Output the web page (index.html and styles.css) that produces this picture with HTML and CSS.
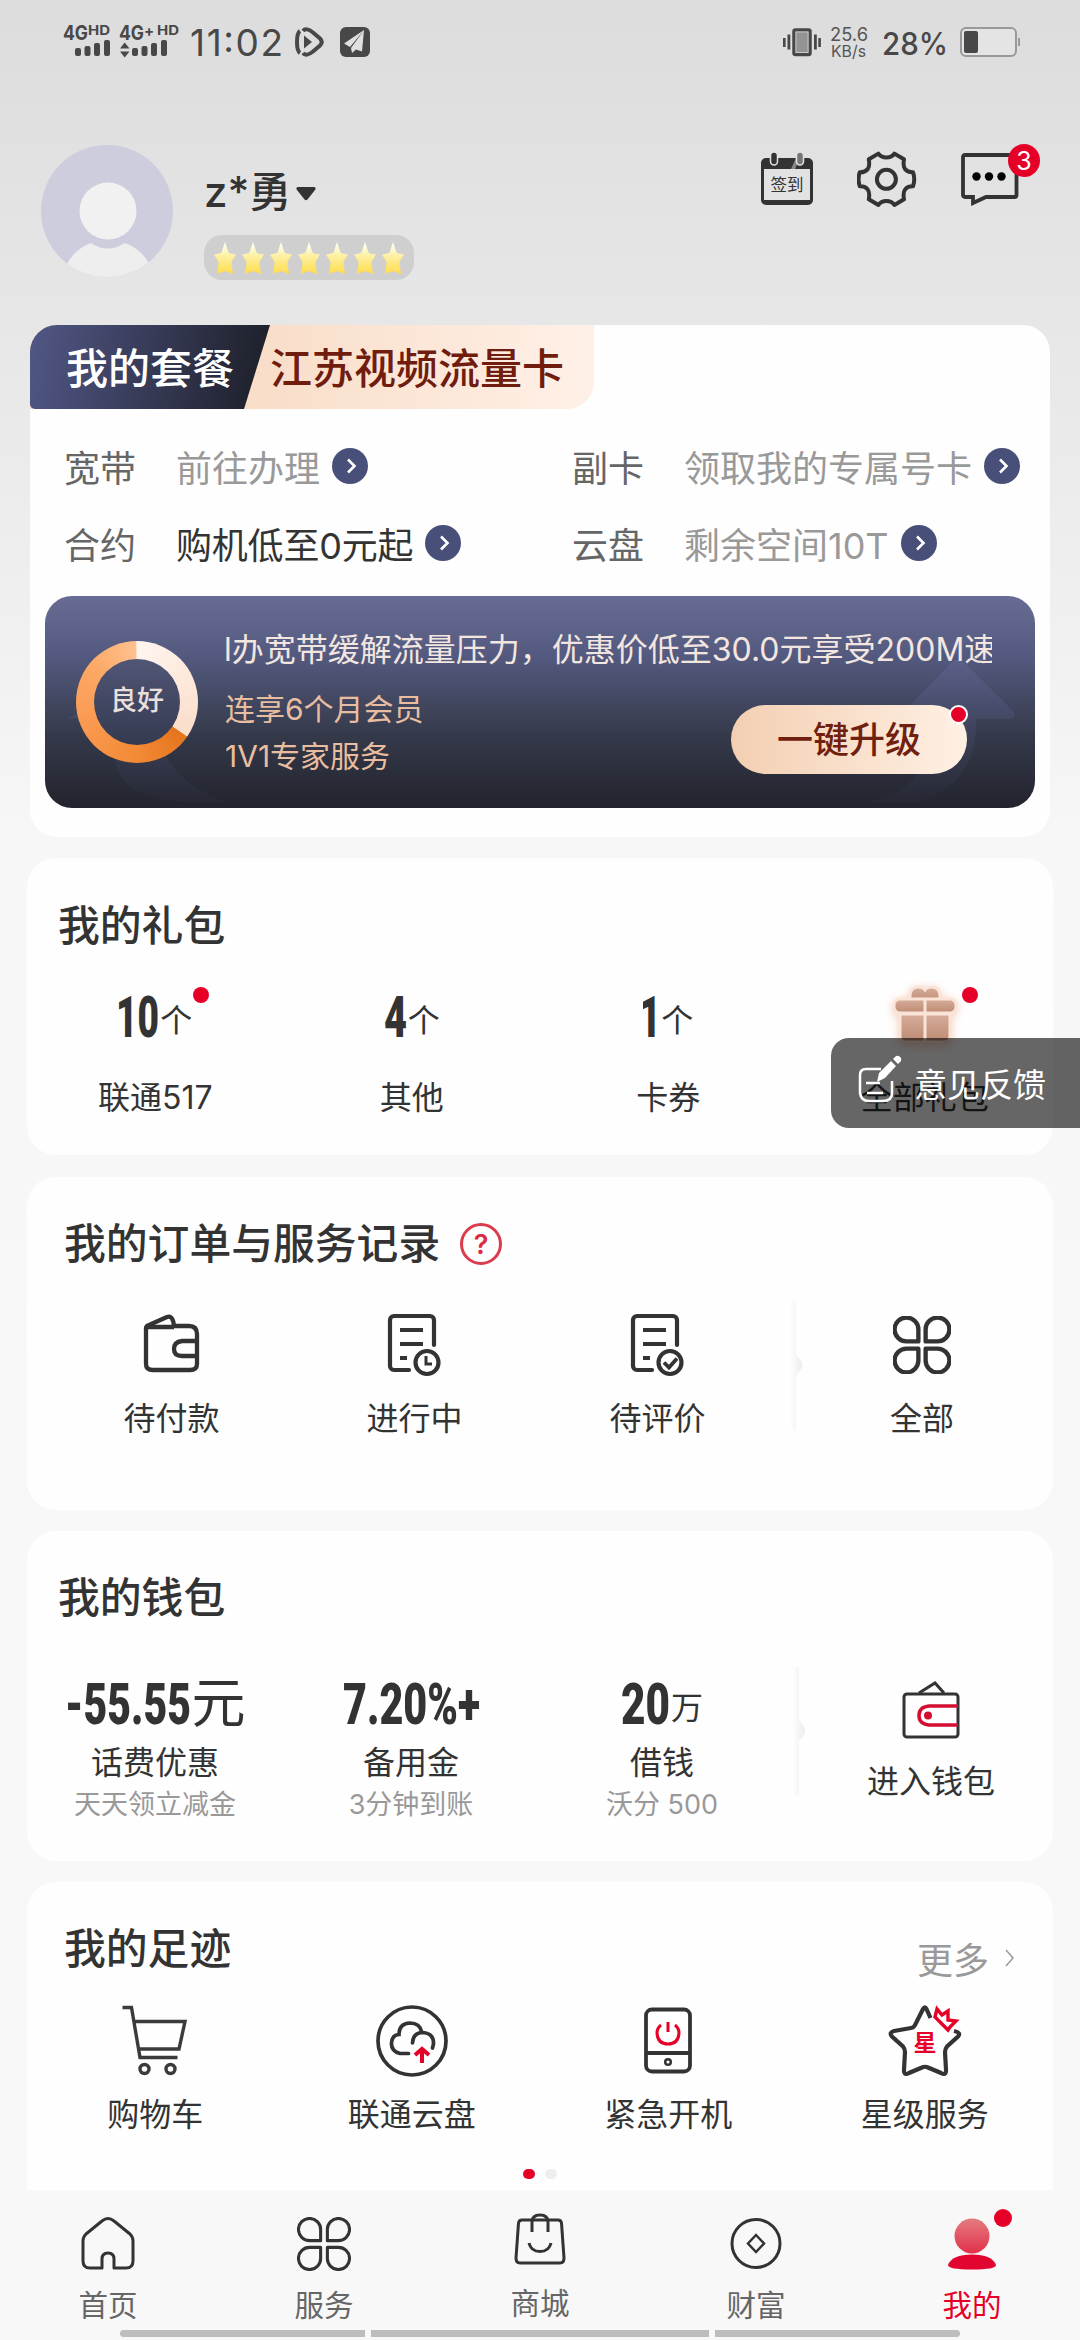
FILE: index.html
```html
<!DOCTYPE html>
<html lang="zh-CN">
<head>
<meta charset="utf-8">
<title>我的</title>
<link rel="stylesheet" href="styles.css">
</head>
<body>
<svg class="defs" width="0" height="0" aria-hidden="true">
  <defs>
    <linearGradient id="gold" x1="0" y1="0" x2="0" y2="1"><stop offset="0" stop-color="#fff"/><stop offset=".45" stop-color="#fdf0a0"/><stop offset="1" stop-color="#ffdc48"/></linearGradient>
    <linearGradient id="gift" x1="0" y1="0" x2="0" y2="1"><stop offset="0" stop-color="#d6ad9b"/><stop offset="1" stop-color="#bd8a72"/></linearGradient>
    <linearGradient id="person" x1="0" y1="0" x2="0" y2="1"><stop offset="0" stop-color="#e57c80"/><stop offset="1" stop-color="#e0314a"/></linearGradient>
    <symbol id="star" viewBox="0 0 24 34"><path d="M12 1 L15.3 10.8 Q16 12.300 17.500 12.500 L23 13.500 L19 20 Q18.300 21.500 18.600 23 L20 33 L12.800 30.200 Q12 30 11.200 30.200 L4 33 L5.400 23 Q5.700 21.500 5 20 L1 13.500 L6.500 12.500 Q8 12.300 8.700 10.800Z" fill="url(#gold)"/></symbol>
    <symbol id="go" viewBox="0 0 36 36"><circle cx="18" cy="18" r="18" fill="#484f78"/><path d="M16 11.500 L22.500 18 L16 24.500" fill="none" stroke="#fff" stroke-width="2.600"/></symbol>
    <symbol id="clover" viewBox="0 0 56 56"><g fill="none" stroke="currentColor" stroke-linejoin="round"><path d="M24.500 24.500 H13.500 A11.500 11.500 0 1 1 24.500 13.500Z"/><path d="M31.500 24.500 H42.500 A11.500 11.500 0 1 0 31.500 13.500Z"/><path d="M24.500 31.500 H13.500 A11.500 11.500 0 1 0 24.500 42.500Z"/><path d="M31.500 31.500 H42.500 A11.500 11.500 0 1 1 31.500 42.500Z"/></g></symbol>
    <symbol id="doc" viewBox="0 0 56 64"><g fill="none" stroke="#333" stroke-width="4.200" stroke-linecap="round" stroke-linejoin="round"><path d="M47 32 V7 a4 4 0 0 0-4-4 H7 a4 4 0 0 0-4 4 V53 a4 4 0 0 0 4 4 H22"/><path d="M13 17 H36 M13 31 H36 M13 45 H20" stroke-linecap="butt"/><circle cx="40" cy="49.500" r="11.500"/></g></symbol>
    <symbol id="divider" viewBox="0 0 24 132"><path d="M6 1 h7 v54 q6 5 6 10 t-6 10 v54 h-7z" fill="url(#shade)"/></symbol>
    <linearGradient id="shade"><stop offset="0" stop-color="#fff"/><stop offset="1" stop-color="#ededed"/></linearGradient>
  </defs>
</svg>

<div class="status">
  <svg width="310" height="34" viewBox="62 25 310 34">
    <g fill="#484848" font-family="Inter" font-weight="700"><text x="63" y="40" font-size="20" textLength="25" lengthAdjust="spacingAndGlyphs">4G</text><text x="88" y="35" font-size="13" textLength="22" lengthAdjust="spacingAndGlyphs">HD</text><text x="119" y="40" font-size="20" textLength="25" lengthAdjust="spacingAndGlyphs">4G</text><text x="144" y="36" font-size="15" textLength="11">+</text><text x="157" y="35" font-size="13" textLength="22" lengthAdjust="spacingAndGlyphs">HD</text></g>
    <g fill="#484848"><rect x="75" y="48" width="6" height="8" rx="2"/><rect x="84.500" y="46" width="6" height="10" rx="2"/><rect x="94" y="43" width="6" height="13" rx="2"/><rect x="104" y="40" width="6" height="16" rx="2"/><rect x="132" y="48" width="6" height="8" rx="2"/><rect x="141.500" y="46" width="6" height="10" rx="2"/><rect x="151" y="43" width="6" height="13" rx="2"/><rect x="161" y="40" width="6" height="16" rx="2"/><path d="M120 48.500 L124.700 42.500 L129.500 48.500Z M120 51.500 L124.700 57.500 L129.500 51.500Z"/></g>
    <text class="clock" x="190" y="56" textLength="93">11:02</text>
    <g fill="none" stroke="#484848" stroke-width="4"><path d="M300 31 Q297 33 297 42 Q297 51 300 53"/><path d="M303 31 Q306 27 313 32.500 L320 38.500 Q323.500 42 320 45.500 L313 51.500 Q306 57 303 53"/></g><path d="M304 35.500 L312 42 L304 48.500Z" fill="#484848"/>
    <rect x="340" y="27" width="30" height="30" rx="6" fill="#484848"/><path d="M364 30 L344 43.500 L350 47 Z M364 30 L351 48 L352 53 L356 49.500 L362 51.500Z" fill="#e0e0e0"/>
  </svg>
  <svg width="240" height="34" viewBox="782 25 240 34">
    <g fill="#484848"><rect x="783" y="38" width="2.600" height="9"/><rect x="787.500" y="34.500" width="2.800" height="15"/><rect x="814" y="34.500" width="2.800" height="15"/><rect x="818.300" y="38" width="2.600" height="9"/></g>
    <rect x="794" y="30" width="16" height="24.500" rx="1.500" fill="#939393" stroke="#484848" stroke-width="3.500"/>
    <rect x="795.900" y="31.900" width="12.200" height="20.700" fill="none" stroke="#dfdfdf" stroke-width=".8"/>
    <text x="830" y="41" class="rate" textLength="38" lengthAdjust="spacingAndGlyphs">25.6</text><text x="831" y="56.500" class="rate unit" textLength="35" lengthAdjust="spacingAndGlyphs">KB/s</text>
    <text x="882" y="54.500" class="percent" textLength="66" lengthAdjust="spacingAndGlyphs">28%</text>
    <rect x="961" y="28" width="55" height="28" rx="5" fill="#e4e4e4" stroke="#999" stroke-width="2"/><rect x="964" y="31" width="14" height="22" rx="2" fill="#484848"/><path d="M1019 38v8" stroke="#999" stroke-width="2"/>
  </svg>
</div>

<header class="profile">
  <svg class="avatar" width="132" height="132" viewBox="0 0 132 132"><defs><clipPath id="face"><circle cx="66" cy="66" r="66"/></clipPath></defs><g clip-path="url(#face)"><rect width="132" height="132" fill="#cecddd"/><path d="M21 132 Q28 106 50 98 Q66 109 84 98 Q106 106 114 132Z" fill="#eee"/><circle cx="67" cy="66" r="28.500" fill="#f1f1f1"/></g></svg>
  <div class="who">
    <div class="name">z*勇<svg width="20" height="14" viewBox="0 0 20 14"><path d="M1.500 0H18.500Q20.500 1 19 3L11.500 12.500Q10 14 8.500 12.500L1 3Q-.5 1 1.500 0Z" fill="#333"/></svg></div>
    <div class="level"><svg><use href="#star"/></svg><svg><use href="#star"/></svg><svg><use href="#star"/></svg><svg><use href="#star"/></svg><svg><use href="#star"/></svg><svg><use href="#star"/></svg><svg><use href="#star"/></svg></div>
  </div>
  <div class="tools">
    <svg width="52" height="54" viewBox="0 0 52 54"><path d="M0 11a5 5 0 0 1 5-5H47a5 5 0 0 1 5 5V48a5 5 0 0 1-5 5H5a5 5 0 0 1-5-5ZM3 17V48H49V17Z" fill="#333" fill-rule="evenodd"/><path d="M30 17L35 6H39L34 17Z" fill="#888"/><rect x="9.500" y="0" width="7" height="13" rx="3.500" fill="#333" stroke="#e3e3e3" stroke-width="1.500"/><rect x="35.500" y="0" width="7" height="13" rx="3.500" fill="#777" stroke="#e3e3e3" stroke-width="1.500"/><text x="26" y="38.500" class="sign" text-anchor="middle">签到</text></svg>
    <svg width="60" height="58" viewBox="0 0 60 58"><g fill="none" stroke="#333" stroke-width="4" stroke-linejoin="round"><circle cx="29.400" cy="28.300" r="9.500"/><path d="M21.400 2.600 Q24 6.500 29.400 6.500 Q34.800 6.500 37.400 2.600 L47 8.300 Q45.800 15 48 18 Q50.500 21.500 56 21.300 Q58.500 28 56 35.300 Q50.500 35.100 48 38.600 Q45.800 41.600 47 48.300 L37.400 54 Q34.800 50 29.400 50 Q24 50 21.400 54 L11.800 48.300 Q13 41.600 10.800 38.600 Q8.300 35.100 2.800 35.300 Q.3 28 2.800 21.300 Q8.300 21.500 10.800 18 Q13 15 11.800 8.300Z"/></g></svg>
    <div class="message"><svg width="58" height="54" viewBox="0 0 58 54"><path d="M4 2H54Q55.500 2 55.500 4V42Q55.500 44 54 44H25L12 50V44H4Q2 44 2 42V4Q2 2 4 2Z" fill="none" stroke="#333" stroke-width="3.800"/><circle cx="15.500" cy="23.500" r="4.200"/><circle cx="28" cy="23.500" r="4.200"/><circle cx="40.500" cy="23.500" r="4.200"/></svg><span class="badge">3</span></div>
  </div>
</header>

<main>
  <section class="card plan">
    <div class="tabs"><div class="tab-dark">我的套餐</div><div class="tab-peach">江苏视频流量卡</div></div>
    <div class="facts">
      <div class="fact"><span>宽带</span><em>前往办理</em><svg><use href="#go"/></svg></div>
      <div class="fact"><span>副卡</span><em>领取我的专属号卡</em><svg><use href="#go"/></svg></div>
      <div class="fact"><span>合约</span><em class="strong">购机低至0元起</em><svg><use href="#go"/></svg></div>
      <div class="fact"><span>云盘</span><em>剩余空间10T</em><svg><use href="#go"/></svg></div>
    </div>
    <div class="banner">
      <svg class="arrows" viewBox="0 0 990 212"><defs><linearGradient id="ar" x1="0" y1="0" x2="0" y2="1"><stop offset="0" stop-color="#66699a" stop-opacity=".45"/><stop offset="1" stop-color="#404769" stop-opacity=".08"/></linearGradient></defs><path d="M98 64 L134 122 H112 Q112 180 180 206 Q78 212 70 165 V122 H22Q60 110 98 64Z" fill="url(#ar)"/><path d="M905 68 Q912 60 921 68 L968 115 Q973 122 964 123 H931 Q933 190 870 206 H820 Q885 198 890 123 H860 Q853 120 860 114Z" fill="url(#ar)"/></svg>
      <div class="ring"><span>良好</span></div>
      <div class="offer">
        <div class="headline">l办宽带缓解流量压力，优惠价低至30.0元享受200M速</div>
        <div class="perks"><div>连享6个月会员<br>1V1专家服务</div><div class="upgrade">一键升级<i></i></div></div>
      </div>
    </div>
  </section>

  <section class="card gifts">
    <h2>我的礼包</h2>
    <div class="four">
      <div class="item"><div class="amount"><svg width="41" height="56"><text x="-2" y="54" textLength="43" lengthAdjust="spacingAndGlyphs">10</text></svg><small>个</small><i class="dot"></i></div><p>联通517</p></div>
      <div class="item"><div class="amount"><svg width="23" height="56"><text x="0" y="54" textLength="23" lengthAdjust="spacingAndGlyphs">4</text></svg><small>个</small></div><p>其他</p></div>
      <div class="item"><div class="amount"><svg width="17" height="56"><text x="-4" y="54" textLength="22" lengthAdjust="spacingAndGlyphs">1</text></svg><small>个</small></div><p>卡券</p></div>
      <div class="item"><div class="amount"><svg class="giftbox" width="78" height="78" viewBox="0 0 78 78"><g fill="url(#gift)" stroke="#fae4d8" stroke-width="3"><path d="M39 25 H24 V17 Q25 9 32 9 Q37 9 39 12 Q41 9 46 9 Q53 9 54 17 V25Z"/><path d="M14 36H64V58Q64 64 58 64H20Q14 64 14 58Z"/><rect x="8" y="21" width="62" height="14" rx="6"/><path d="M39 21V64" fill="none"/></g></svg><i class="dot"></i></div><p>全部礼包</p></div>
    </div>
  </section>

  <section class="card orders">
    <h2>我的订单与服务记录<span class="help">?</span></h2>
    <div class="four split">
      <div class="item"><svg width="58" height="64" viewBox="0 0 58 64"><g fill="none" stroke="#333" stroke-width="4.300" stroke-linejoin="round"><path d="M3 15 Q3 13 6 12 L24 4 Q30 2 31 13 H46 Q54 13 54 21 V51 Q54 57 47 57 H10 Q3 57 3 51Z"/><path d="M3 14H31M54 28H39Q31 29 31 36Q31 43 39 43H54"/></g></svg><p>待付款</p></div>
      <div class="item"><svg width="56" height="64"><use href="#doc"/><path d="M39 43v8h6" fill="none" stroke="#333" stroke-width="3"/></svg><p>进行中</p></div>
      <div class="item"><svg width="56" height="64"><use href="#doc"/><path d="M34 49.500l5 5 8-9" fill="none" stroke="#333" stroke-width="3.800"/></svg><p>待评价</p></div>
      <svg class="divider" width="24" height="132"><use href="#divider"/></svg>
      <div class="item"><svg class="clover" width="58" height="64"><use href="#clover"/></svg><p>全部</p></div>
    </div>
  </section>

  <section class="card wallet">
    <h2>我的钱包</h2>
    <div class="four split">
      <div class="item"><div class="amount"><svg width="126" height="56"><text x="0" y="54" textLength="126" lengthAdjust="spacingAndGlyphs">-55.55</text></svg><b>元</b></div><p>话费优惠</p><small class="note">天天领立减金</small></div>
      <div class="item"><div class="amount"><svg width="137" height="56"><text x="0" y="54" textLength="137" lengthAdjust="spacingAndGlyphs">7.20%+</text></svg></div><p>备用金</p><small class="note">3分钟到账</small></div>
      <div class="item"><div class="amount"><svg width="49" height="56"><text x="0" y="54" textLength="49" lengthAdjust="spacingAndGlyphs">20</text></svg><small>万</small></div><p>借钱</p><small class="note">沃分 500</small></div>
      <svg class="divider" width="24" height="132"><use href="#divider"/></svg>
      <div class="item enter"><svg width="60" height="60" viewBox="0 0 60 60"><rect x="3" y="13" width="54" height="43" rx="3" fill="none" stroke="#333" stroke-width="3"/><path d="M18 12L34 2L43 12" fill="none" stroke="#333" stroke-width="3"/><path d="M57 25H28Q18 26 18 34.500Q18 43 28 44H57" fill="none" stroke="#d40e30" stroke-width="3.500"/><circle cx="27" cy="34.500" r="4" fill="#d40e30"/></svg><p>进入钱包</p></div>
    </div>
  </section>

  <section class="card tracks">
    <div class="head"><h2>我的足迹</h2><span class="more">更多<svg width="12" height="18" viewBox="0 0 12 18"><path d="M2 1L9 9L2 17" fill="none" stroke="#999" stroke-width="1.500"/></svg></span></div>
    <div class="four">
      <div class="item"><svg width="74" height="76" viewBox="0 0 74 76"><g fill="none" stroke="#3b3b3b" stroke-width="3.400"><path d="M4.500 4.500H13.500L22 54.500H59.500M15 18.500H67L61 46H21"/><circle cx="26.500" cy="66" r="4.500"/><circle cx="52.500" cy="66" r="4.500"/></g></svg><p>购物车</p></div>
      <div class="item"><svg width="76" height="76" viewBox="0 0 76 76"><g fill="none" stroke="#333" stroke-width="3.700" stroke-linecap="round"><circle cx="38" cy="38" r="34"/><path d="M34.500 50.500H26Q17 48 17.500 40Q18 32 25 31.500Q25 20.500 36 20Q46 20 48 29.500M38.500 40Q39 30 48 29.500Q60 30 59.500 41Q59 43 58.500 45"/></g><path d="M48 60V47M41 52L48 46L55 52" fill="none" stroke="#e60027" stroke-width="4"/></svg><p>联通云盘</p></div>
      <div class="item"><svg width="56" height="76" viewBox="0 0 56 76"><g fill="none" stroke="#333" stroke-width="3.800"><rect x="6" y="6.500" width="44" height="62" rx="6"/><path d="M6 50H50"/><circle cx="28" cy="59" r="2.800" stroke-width="2.500"/></g><path d="M28 19V29M21 22Q17 25 17 30.500Q18 41 28 41Q38 41 39 30.500Q39 25 35 22" fill="none" stroke="#e60027" stroke-width="3"/></svg><p>紧急开机</p></div>
      <div class="item"><svg width="76" height="76" viewBox="0 0 76 76"><path d="M43.500 15L39.500 6Q38 2.500 36 6L28 22Q27 24.500 24 25L7 28Q1.500 29.500 5 33.500L16 43.500Q18 46 18 49L17 67Q17 73 22 70L35 64.500Q38 63 41 64.500L54 70Q59 73 59 67L58 49Q58 46 60 43.500L71 33.500Q74.500 29.500 67 28" fill="none" stroke="#333" stroke-width="4.200"/><path d="M48 14L50 6L55 12L61 8L61 17L69 18L63 24L61 27Z" fill="none" stroke="#e60027" stroke-width="3.400"/><text class="xing" x="38" y="48" text-anchor="middle">星</text></svg><p>星级服务</p></div>
    </div>
    <div class="pager"><i></i><i></i></div>
  </section>
</main>

<nav>
  <div class="tab"><svg width="56" height="56" viewBox="0 0 56 56"><path d="M22 52H10Q3 52 3 45V25Q3 21 6 18L22 5Q28 0 34 5L50 18Q53 21 53 25V45Q53 52 46 52H34V43Q34 37 28 37Q22 37 22 43Z" fill="none" stroke="#333" stroke-width="3" stroke-linejoin="round"/></svg><span>首页</span></div>
  <div class="tab"><svg class="clover" width="54" height="56"><use href="#clover"/></svg><span>服务</span></div>
  <div class="tab shop"><svg width="56" height="56" viewBox="0 0 56 56"><g fill="none" stroke="#333" stroke-width="3" stroke-linejoin="round"><path d="M10 9H46Q49 9 49.500 12L52 47Q52 52 48 52H8Q4 52 4 47L6.500 12Q7 9 10 9Z"/><path d="M20 21V11Q20 4 28 4Q36 4 36 11V21M17 32Q19 40.500 28 40.500Q37 40.500 39 32"/></g></svg><span>商城</span></div>
  <div class="tab"><svg width="56" height="56" viewBox="0 0 56 56"><circle cx="28" cy="27.500" r="24" fill="none" stroke="#333" stroke-width="3"/><path d="M28 19L36 27.500L28 36L20 27.500Z" fill="none" stroke="#333" stroke-width="2.500"/></svg><span>财富</span></div>
  <div class="tab on"><svg width="56" height="56" viewBox="0 0 56 56"><circle cx="28" cy="20" r="17.500" fill="url(#person)"/><path d="M28 38.500Q48 38.500 52 49Q52 53.500 28 53.500Q4 53.500 4 49Q8 38.500 28 38.500Z" fill="#e2052f"/></svg><i class="dot"></i><span>我的</span></div>
  <div class="homebar"><i></i><i></i><i></i></div>
</nav>

<div class="feedback"><svg width="46" height="54" viewBox="0 0 46 54"><g fill="none" stroke="#fff" stroke-width="2.500"><path d="M24 17H9Q3 17 3 23V41Q4 49 12 49H26Q35 49 35 41V29M9 31H23M10 41H26"/></g><path d="M20 30L22 21L34 9L39 14L28 26ZM36 7L38 5Q41 2 44 6Q45 9 42 11L41 12Z" fill="#fff"/></svg><span>意见反馈</span></div>
</body>
</html>
```
FILE: styles.css
```css
* { box-sizing: border-box; }
body {
  margin: 0; width: 1080px; height: 2340px; overflow: hidden; position: relative;
  display: flex; flex-direction: column;
  font-family: Inter, "Noto Sans CJK SC", sans-serif; color: #333;
  background: linear-gradient(#dcdcdc 0, #e6e6e6 300px, #f7f7f7 850px, #f8f8f8 100%);
}
.defs { position: absolute; }
svg { display: block; flex: none; }
h2, p { margin: 0; font-weight: 400; }
i, em { font-style: normal; }

.status { height: 84px; padding: 25px 58px 0 62px; display: flex; justify-content: space-between; flex: none; }
.clock { font-size: 37px; fill: #484848; }
.rate { font-size: 18.500px; fill: #555; }
.unit { font-size: 16.500px; }
.percent { font-size: 31px; font-weight: 500; fill: #484848; }

.profile { height: 241px; padding: 61px 61px 0 41px; display: flex; flex: none; align-items: flex-start; }
.who { margin-left: 31px; flex: 1; }
.name { height: 90px; padding: 17px 0 13px; font-size: 42px; line-height: 60px; font-weight: 500; display: flex; align-items: center; }
.name svg { margin-left: 5px; margin-top: 3px; }
.level { width: 210px; height: 45px; border-radius: 18px; background: #cfcfcf; display: flex; justify-content: center; align-items: center; gap: 4px; }
.level svg { width: 24px; height: 34px; }
.tools { display: flex; gap: 44px; padding-top: 6px; }
.sign { font-size: 16.500px; fill: #333; }
.message { position: relative; margin-top: 2px; }
.tools > svg:first-child { margin-top: 1px; }
.badge { position: absolute; left: 47px; top: -9px; width: 32px; height: 33px; border-radius: 50%; background: #e60027; color: #fff; font-size: 25px; line-height: 34px; text-align: center; }

main { height: 1865px; overflow: hidden; flex: none; padding: 0 27px; display: flex; flex-direction: column; }
.card { background: #fefefe; border-radius: 29px; flex: none; }
.card h2 { font-size: 41.800px; line-height: 60px; font-weight: 500; }

.plan { margin: 0 3px 21px; height: 512px; border-radius: 27px; overflow: hidden; padding-bottom: 29px; }
.tabs { height: 84px; width: 564px; font-size: 42px; line-height: 88px; font-weight: 500; background: linear-gradient(90deg, #f8dcc6 35%, #fff0e7); border-radius: 0 0 27px 0; display: flex; }
.tab-dark { width: 240px; padding-left: 36px; color: #fff; background: linear-gradient(100deg, #515786, #20222e 92%); clip-path: polygon(0 0, 100% 0, 214px 100%, 0 100%); border-radius: 0 0 0 5px; }
.tab-peach { color: #701c0e; }
.facts { display: grid; grid-template-columns: 508px 1fr; grid-auto-rows: 77px; padding: 19px 0 14px 34px; }
.fact { display: flex; align-items: center; font-size: 36px; color: #666; padding-bottom: 1px; }
.fact em { margin: 0 12px 0 40px; color: #999; white-space: nowrap; }
.fact em.strong { color: #333; letter-spacing: -.2px; }
.fact svg { width: 36px; height: 36px; }
.banner { position: relative; height: 212px; margin: 0 15px; border-radius: 27px; overflow: hidden; background: linear-gradient(#686c94 0, #545a7f 28%, #353a4b 65%, #22232c); display: flex; padding: 0 40px 0 31px; }
.arrows { position: absolute; inset: 0; width: 990px; height: 212px; }
.ring { position: relative; width: 122px; height: 122px; margin-top: 45px; border-radius: 50%; padding: 18px; background: conic-gradient(#fff5ef 0, #fbddca 34.500%, #e4751d 34.700%, #f38a35 50%, #fa9b53 70%, #fba966 86%, #ffc18e 99.600%, #fff5ef 100%); flex: none; }
.ring span { display: block; height: 86px; border-radius: 50%; background: linear-gradient(#505675, #343a50); font-size: 27px; line-height: 84px; font-weight: 500; text-align: center; color: #e9dfdb; }
.offer { position: relative; flex: 1; margin-left: 26px; min-width: 0; }
.headline { height: 78px; padding-top: 31px; line-height: 46px; font-size: 32px; color: #f3e6e0; white-space: nowrap; overflow: hidden; width: 768px; }
.perks { display: flex; justify-content: space-between; color: #e9bea0; font-size: 30px; line-height: 47px; padding: 12px 28px 0 1px; }
.upgrade { position: relative; width: 236px; height: 69px; margin: 19px 0 0; border-radius: 35px; background: linear-gradient(90deg, #f3cfb2, #fff0e4); color: #70200f; font-size: 36px; line-height: 71px; font-weight: 500; text-align: center; }
.upgrade i { position: absolute; right: -1px; top: 0; width: 19px; height: 19px; border-radius: 50%; background: #e60027; border: 2px solid #fff; }

.gifts { height: 297px; margin-bottom: 22px; padding-top: 38px; }
.gifts h2, .wallet h2 { padding-left: 31px; }
.four { display: grid; grid-template-columns: repeat(4, 1fr); }
.item { display: flex; flex-direction: column; align-items: center; }
.item p { font-size: 32px; line-height: 44px; white-space: nowrap; }
.amount { position: relative; height: 60px; display: flex; align-items: flex-end; justify-content: center; }
.amount text { font-family: Roboto; font-size: 58px; font-weight: 900; fill: #333; }
.amount small { font-size: 32px; line-height: 36px; }
.amount b { font-size: 54px; line-height: 54px; font-weight: 400; }
.dot { position: absolute; width: 16px; height: 16px; border-radius: 50%; background: #e60027; }
.gifts .four { padding-top: 23px; }
.gifts .amount { margin-bottom: 37px; gap: 1px; }
.gifts .dot { left: 75px; top: 8px; }
.giftbox { margin-bottom: -17px; filter: drop-shadow(0 2px 4px #f5cbb8); }
.gifts .item:last-child .dot { left: 76px; }

.orders { height: 333px; margin-bottom: 21px; padding-top: 37px; }
.orders h2 { padding-left: 37px; display: flex; align-items: center; }
.help { margin-left: 20px; width: 42px; height: 42px; border: 3px solid #dc3b4d; border-radius: 50%; font-size: 27px; line-height: 37px; text-align: center; color: #dc2b42; font-weight: 600; }
.orders .four { grid-template-columns: 243px 243px 243px 24px 1fr; padding: 26px 12px 0 23px; }
.orders .divider { margin-left: 4px; }
.orders .item { padding-top: 13px; }
.orders .item p { margin-top: 20px; }
.clover { color: #333; stroke-width: 4.200; }
.orders .clover { padding: 3px 0; }

.wallet { height: 330px; margin-bottom: 21px; padding-top: 37px; }
.wallet .four { grid-template-columns: 256px 256px 246px 24px 1fr; padding-top: 38px; }
.wallet .amount { gap: 1px; margin-bottom: 15px; }
.wallet .amount b { margin-bottom: -5px; }
.wallet .note { font-size: 27px; line-height: 38px; margin-top: 1px; color: #999; }
.wallet .enter { padding-top: 15px; }
.wallet .divider { margin-left: 1px; }
.enter p { margin-top: 19px; }

.tracks { height: 340px; padding-top: 37px; }
.head { display: flex; justify-content: space-between; padding: 0 37px; height: 78px; }
.more { display: flex; align-items: center; gap: 15px; font-size: 36px; color: #999; }
.tracks .four { padding-top: 6px; }
.tracks .item p { margin-top: 14px; }
.xing { font-size: 23px; font-weight: 700; fill: #e60027; }
.pager { display: flex; gap: 10px; justify-content: center; margin-top: 32px; }
.pager i { width: 12px; height: 10px; border-radius: 5px; background: #e60027; }
.pager i + i { background: #eee; }

nav { height: 150px; background: #f8f8f8; display: grid; grid-template-columns: repeat(5, 216px); grid-template-rows: 140px 7px; flex: none; }
.tab { position: relative; display: flex; flex-direction: column; align-items: center; padding-top: 26px; color: #666; font-size: 29.500px; }
.tab span { line-height: 42px; margin-top: 12px; }
.shop { padding-top: 21px; }
.shop span { margin-top: 15px; }
.tab .clover { padding: 1px 0; stroke-width: 3.200; }
.on { color: #e60027; }
.tab .dot { width: 18px; height: 18px; left: 130px; top: 19px; }
.homebar { grid-column: 1 / -1; margin: 0 120px; display: grid; grid-template-columns: 245px 1fr 245px; gap: 6px; }
.homebar i { background: #bdbdbd; }
.homebar i:first-child { border-radius: 4px 0 0 4px; }
.homebar i:last-child { border-radius: 0 4px 4px 0; }

.feedback { position: absolute; right: 0; top: 1038px; width: 249px; height: 90px; border-radius: 18px 0 0 18px; background: rgba(0, 0, 0, .6); color: #fff; display: flex; align-items: center; gap: 11px; padding-left: 26px; font-size: 33px; white-space: nowrap; }
.feedback svg { margin-top: -8px; }
```
